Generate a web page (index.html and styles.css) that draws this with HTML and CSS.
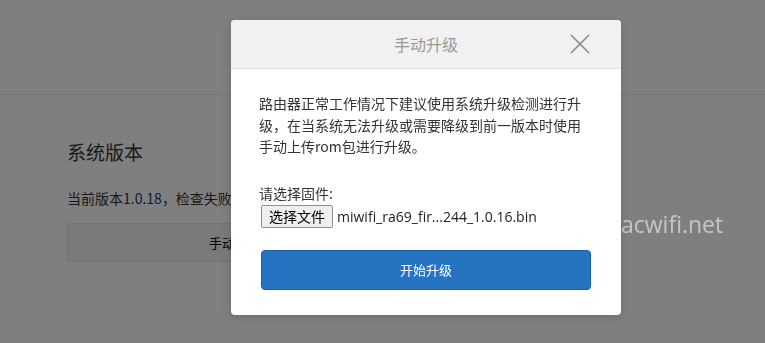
FILE: index.html
```html
<!DOCTYPE html>
<html lang="zh-CN">
<head>
  <meta charset="UTF-8" />
  <meta name="viewport" content="width=device-width, initial-scale=1.0" />
  <title>手动升级</title>
  <link rel="stylesheet" href="styles.css">
</head>
<body>
  <div class="page">
    <div class="topbar"></div>
    <div class="section">
      <h2 class="section-title">系统版本</h2>
      <p class="version">当前版本<a href="#">1.0.18</a>，检查失败</p>
      <div class="manual-btn">手动升级</div>
    </div>
  </div>

  <div class="mask"></div>
  <div class="watermark">acwifi.net</div>

  <div class="dialog">
    <div class="dialog-head">
      <span class="dialog-title">手动升级</span>
      <span class="dialog-close">
        <svg width="20" height="20" viewBox="0 0 20 20">
          <path d="M1 1 L19 19 M19 1 L1 19" stroke="#8a8a8a" stroke-width="1.6" fill="none" />
        </svg>
      </span>
    </div>
    <div class="dialog-body">
      <p class="tip">路由器正常工作情况下建议使用系统升级检测进行升级，在当系统无法升级或需要降级到前一版本时使用手动上传rom包进行升级。</p>
      <label class="field-label">请选择固件:</label>
      <div class="file-row">
        <span class="file-btn">选择文件</span>
        <span class="file-name">miwifi_ra69_fir...244_1.0.16.bin</span>
      </div>
      <button class="btn-primary">开始升级</button>
    </div>
  </div>
</body>
</html>
```

FILE: styles.css
```css
* {
  box-sizing: border-box;
  font-family: "Noto Sans CJK SC", "Microsoft YaHei", sans-serif;
}
body {
  margin: 0;
  background: #fff;
  color: #333;
  height: 343px;
  overflow: hidden;
}
.topbar {
  height: 95px;
  border-bottom: 1px solid #ececec;
}
.section {
  padding: 42px 67px 0;
}
.section-title {
  margin: 0;
  font-size: 19px;
  font-weight: normal;
  line-height: 30px;
  color: #333;
}
.version {
  margin: 21px 0 0;
  font-size: 14px;
  line-height: 20px;
}
.version a {
  color: #0a3d80;
  text-decoration: none;
}
.manual-btn {
  margin-top: 15px;
  width: 336px;
  height: 39px;
  line-height: 37px;
  text-align: center;
  font-size: 13px;
  color: #000;
  background: #f4f4f4;
  border: 1px solid #e4e4e4;
  border-radius: 2px;
}
.mask {
  position: fixed;
  inset: 0;
  background: rgba(0, 0, 0, 0.5);
}
.watermark {
  position: absolute;
  left: 621px;
  top: 208px;
  font-family: "Open Sans", sans-serif;
  font-size: 23px;
  color: rgba(255, 255, 255, 0.55);
}
.dialog {
  position: absolute;
  left: 231px;
  top: 20px;
  width: 390px;
  height: 295px;
  background: #fff;
  border-radius: 4px;
  overflow: hidden;
  box-shadow: 0 2px 10px rgba(0, 0, 0, 0.15);
}
.dialog-head {
  height: 49px;
  background: #f1f1f1;
  border-bottom: 1px solid #e2e2e2;
  display: flex;
  align-items: center;
  justify-content: center;
  position: relative;
}
.dialog-title {
  font-size: 16px;
  color: #999;
}
.dialog-close {
  position: absolute;
  right: 31px;
  top: 14px;
  width: 20px;
  height: 20px;
}
.dialog-close svg {
  display: block;
}
.dialog-body {
  padding: 24px 30px 0 28px;
}
.tip {
  margin: 0;
  font-size: 14px;
  line-height: 21.5px;
  color: #333;
}
.field-label {
  display: block;
  margin-top: 25px;
  font-size: 14px;
  line-height: 20px;
  color: #333;
}
.file-row {
  display: flex;
  align-items: center;
  margin-top: 2px;
  padding-left: 2px;
}
.file-btn {
  height: 23px;
  padding: 0 7px;
  font-size: 14px;
  line-height: 21px;
  color: #000;
  background: #efefef;
  border: 1px solid #8f8f8f;
  border-radius: 2px;
}
.file-name {
  margin-left: 4px;
  font-family: "Open Sans", "Noto Sans", sans-serif;
  font-size: 14px;
  color: #222;
}
.btn-primary {
  display: block;
  margin: 22px 0 0 2px;
  width: 330px;
  height: 40px;
  border: 1px solid #1d5fa8;
  border-radius: 4px;
  background: #2673c2;
  color: #fff;
  font-size: 13px;
  cursor: pointer;
}
```
